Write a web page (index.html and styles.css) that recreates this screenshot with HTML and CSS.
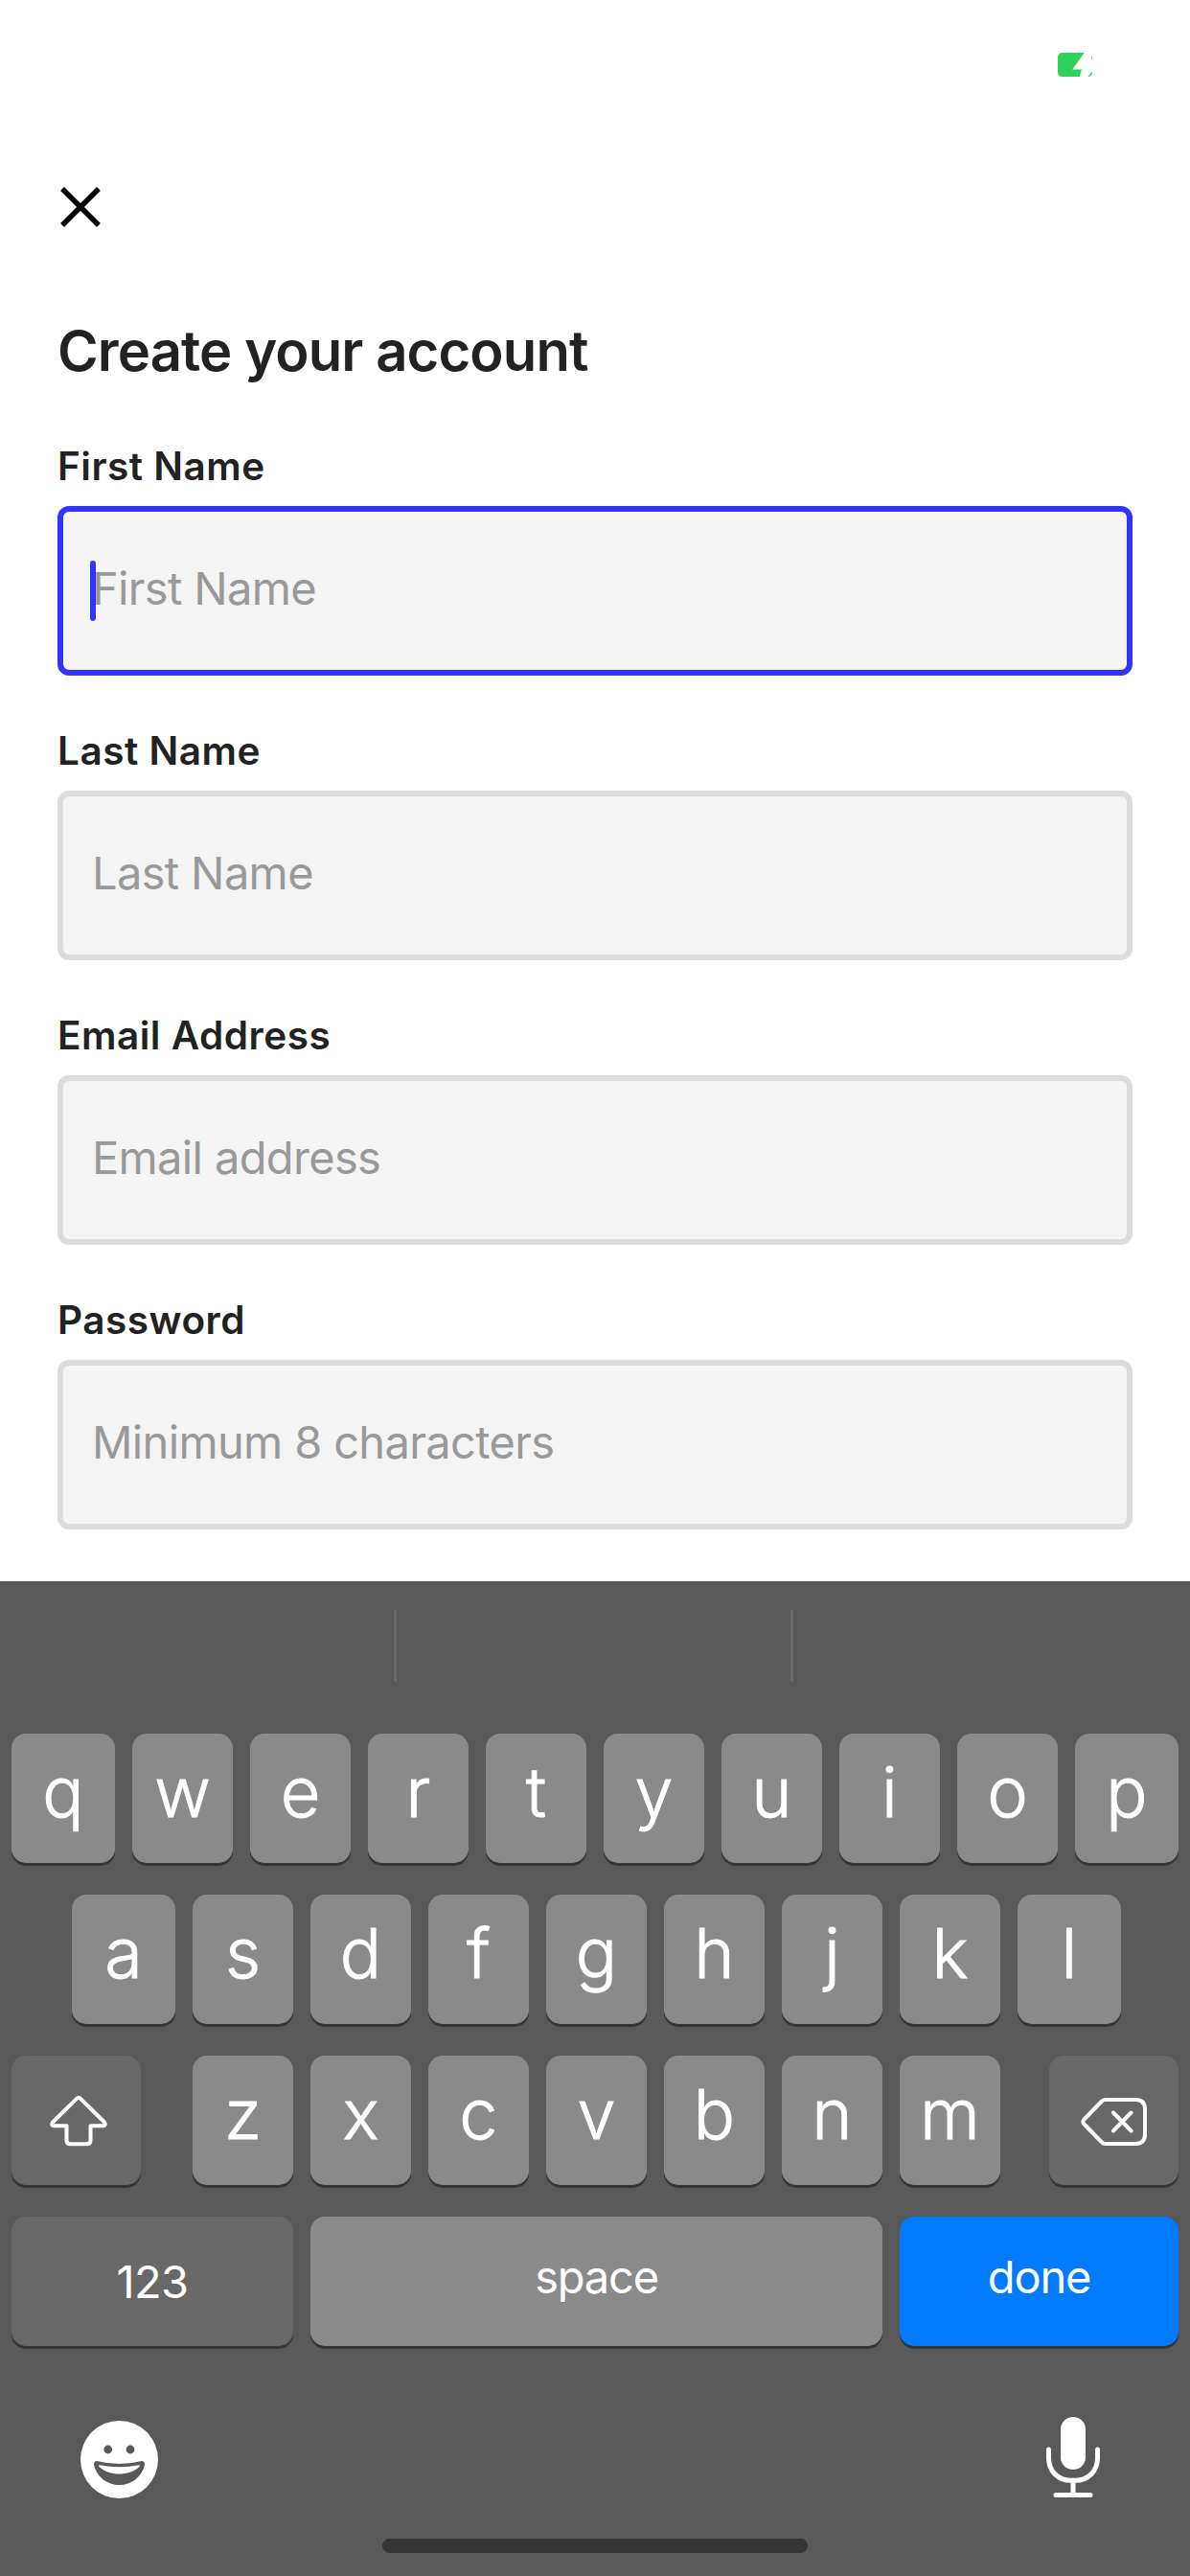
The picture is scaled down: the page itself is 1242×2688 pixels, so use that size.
FILE: index.html
```html
<!DOCTYPE html>
<html lang="en">
<head>
<meta charset="utf-8">
<title>Create your account</title>
<link rel="stylesheet" href="styles.css">
</head>
<body>
<div class="screen">
  <header class="status-bar">
    <svg class="battery" width="36" height="25" viewBox="0 0 36 25" aria-hidden="true">
      <path fill="#30d158" d="M5 0H27.7L15.3 17.6H25L22.7 25H5Q0 25 0 20V5Q0 0 5 0ZM36 3.5V7L35 6.2ZM36 19.2V20.5Q35.4 24.3 32.4 25H31.6Z"/>
    </svg>
  </header>
  <nav class="top-bar">
    <button class="close" aria-label="Close">
      <svg width="42" height="42" viewBox="0 0 42 42"><path d="M2 2L40 40M40 2L2 40" fill="none" stroke="#000" stroke-width="5.4"/></svg>
    </button>
  </nav>
  <main class="form">
    <h1 class="title">Create your account</h1>
    <div class="field"><div class="label">First Name</div><div class="input focused"><span class="caret"></span><span class="placeholder">First Name</span></div></div>
    <div class="field"><div class="label">Last Name</div><div class="input"><span class="placeholder">Last Name</span></div></div>
    <div class="field"><div class="label">Email Address</div><div class="input"><span class="placeholder">Email address</span></div></div>
    <div class="field"><div class="label">Password</div><div class="input"><span class="placeholder">Minimum 8 characters</span></div></div>
  </main>
  <section class="keyboard">
    <div class="suggestions"><span></span><span></span><span></span></div>
    <div class="rows">
      <div class="row">
        <div class="key edge">q</div><div class="key">w</div><div class="key">e</div><div class="key">r</div><div class="key">t</div><div class="key">y</div><div class="key">u</div><div class="key">i</div><div class="key">o</div><div class="key edge">p</div>
      </div>
      <div class="row middle">
        <div class="key edge">a</div><div class="key">s</div><div class="key">d</div><div class="key">f</div><div class="key">g</div><div class="key">h</div><div class="key">j</div><div class="key">k</div><div class="key edge">l</div>
      </div>
      <div class="row spread">
        <div class="key special shift">
          <svg width="60" height="54" viewBox="0 0 60 54" aria-hidden="true"><path d="M28.3 2.6Q30 1.2 31.7 2.6L57 27.5Q59 30.8 55.8 31.3H42.5V46.5Q42.5 50.3 38.7 50.3H21.3Q17.5 50.3 17.5 46.5V31.3H4.2Q1 30.8 3 27.5Z"/></svg>
        </div>
        <div class="letters">
          <div class="key">z</div><div class="key">x</div><div class="key">c</div><div class="key">v</div><div class="key">b</div><div class="key">n</div><div class="key">m</div>
        </div>
        <div class="key special">
          <svg width="70" height="52" viewBox="0 0 70 52" aria-hidden="true"><path d="M25.5 3H57Q67 3 67 13V39Q67 49 57 49H25.5Q23.5 49 21.5 47L3.5 28.5Q1.2 26 3.5 23.5L21.5 5Q23.5 3 25.5 3ZM34 16.5L52.5 35.5M52.5 16.5L34 35.5"/></svg>
        </div>
      </div>
      <div class="row">
        <div class="key word numbers">123</div><div class="key word space">space</div><div class="key word done">done</div>
      </div>
    </div>
    <div class="dock">
      <svg class="emoji" width="81" height="81" viewBox="0 0 81 81" aria-hidden="true">
        <circle cx="40.5" cy="40.5" r="40.5" fill="#fff"/>
        <circle cx="28.7" cy="30" r="4.4" fill="#595959"/><circle cx="52" cy="30" r="4.4" fill="#595959"/>
        <path fill="#595959" d="M17 42Q40.5 48 64 42Q67 42 67 46C64 59 53 67 40.5 67S17 59 14 46Q14 42 17 42Z"/>
        <path fill="#fff" d="M20 46.2Q40.5 50.5 61 46.2Q63 46.5 61 48.5C56 53 48 55.5 40.5 55.5S25 53 20 48.5Q18 46.5 20 46.2Z"/>
      </svg>
      <svg width="56" height="84" viewBox="0 0 56 84" aria-hidden="true">
        <rect x="15" y="0" width="26" height="55" rx="13" fill="#fff"/>
        <path d="M2.5 34V43C2.5 57 13 66.3 25 66.3H31C43 66.3 53.5 57 53.5 43V34M28 66V81M10 81.500H46" fill="none" stroke="#fff" stroke-width="5" stroke-linecap="round"/>
      </svg>
    </div>
    <div class="home-indicator"></div>
  </section>
</div>
</body>
</html>
```
FILE: styles.css
```css
* { box-sizing: border-box; }
body { margin: 0; background: #fff; font-family: Inter, "Liberation Sans", sans-serif; }
.screen { width: 1242px; height: 2688px; display: flex; flex-direction: column; overflow: hidden; background: #fff; }
.status-bar { height: 132px; display: flex; justify-content: flex-end; padding: 55px 102px 0 0; }
.top-bar { height: 168px; padding: 63px 63px 0; }
.close { display: block; width: 42px; height: 42px; padding: 0; border: 0; background: none; }
.form { height: 1350px; padding: 0 60px; color: #222; }
.title { margin: 0; height: 156px; padding-top: 30px; font-size: 58px; line-height: 72px; font-weight: 600; letter-spacing: -0.9px; white-space: nowrap; }
.field { height: 297px; }
.label { height: 72px; padding-top: 6px; font-size: 40.5px; line-height: 50px; font-weight: 600; letter-spacing: 0.5px; white-space: nowrap; }
.input { display: flex; align-items: center; position: relative; height: 177px; padding: 0 30px 6px; border: 6px solid #dcdcdc; border-radius: 12px; background: #f4f4f4; }
.input.focused { border-color: #33f; }
.placeholder { font-size: 47px; line-height: 58px; color: #999; letter-spacing: -0.65px; white-space: nowrap; }
.caret { position: absolute; left: 28px; top: 51px; width: 6px; height: 63px; border-radius: 3px; background: #33f; }
.keyboard { height: 1038px; background: #595959; color: #fff; }
.suggestions { height: 159px; padding: 30px 0 54px; display: grid; grid-template-columns: 414px 414px 414px; }
.suggestions span { border-right: 3px solid #6a6a6a; }
.suggestions span:last-child { border: 0; }
.rows { display: flex; flex-direction: column; gap: 33px; padding: 0 12px; }
.row, .letters { display: flex; gap: 18px; }
.middle { padding: 0 60px 0 63px; }
.spread { justify-content: space-between; }
.spread .letters { margin-left: 3px; }
.row.spread { gap: 0; }
.key { width: 105px; height: 135px; display: flex; justify-content: center; align-items: center; padding-bottom: 13px; border-radius: 15px; background: #8a8a8a; box-shadow: 0 3px 0 #353535; font-size: 72px; line-height: 88px; font-weight: 300; -webkit-text-stroke: 0.9px #fff; }
.edge { width: 108px; }
.special { width: 135px; padding: 3px 0 0; background: #686868; }
.shift { padding-left: 4px; }
.special svg { fill: none; stroke: #fff; stroke-width: 4; stroke-linecap: round; stroke-linejoin: round; }
.word { font-size: 47px; line-height: 58px; font-weight: 400; padding-bottom: 9px; letter-spacing: -1.2px; -webkit-text-stroke: 0; }
.numbers { width: 294px; background: #686868; padding-bottom: 0; letter-spacing: -0.6px; }
.space { width: 597px; }
.done { width: 291px; background: #007aff; }
.dock { display: flex; justify-content: space-between; height: 201px; padding: 74px 94px 0 84px; }
.emoji { margin-top: 4px; }
.home-indicator { width: 444px; height: 15px; margin: 0 auto; border-radius: 8px; background: #353535; }
```
